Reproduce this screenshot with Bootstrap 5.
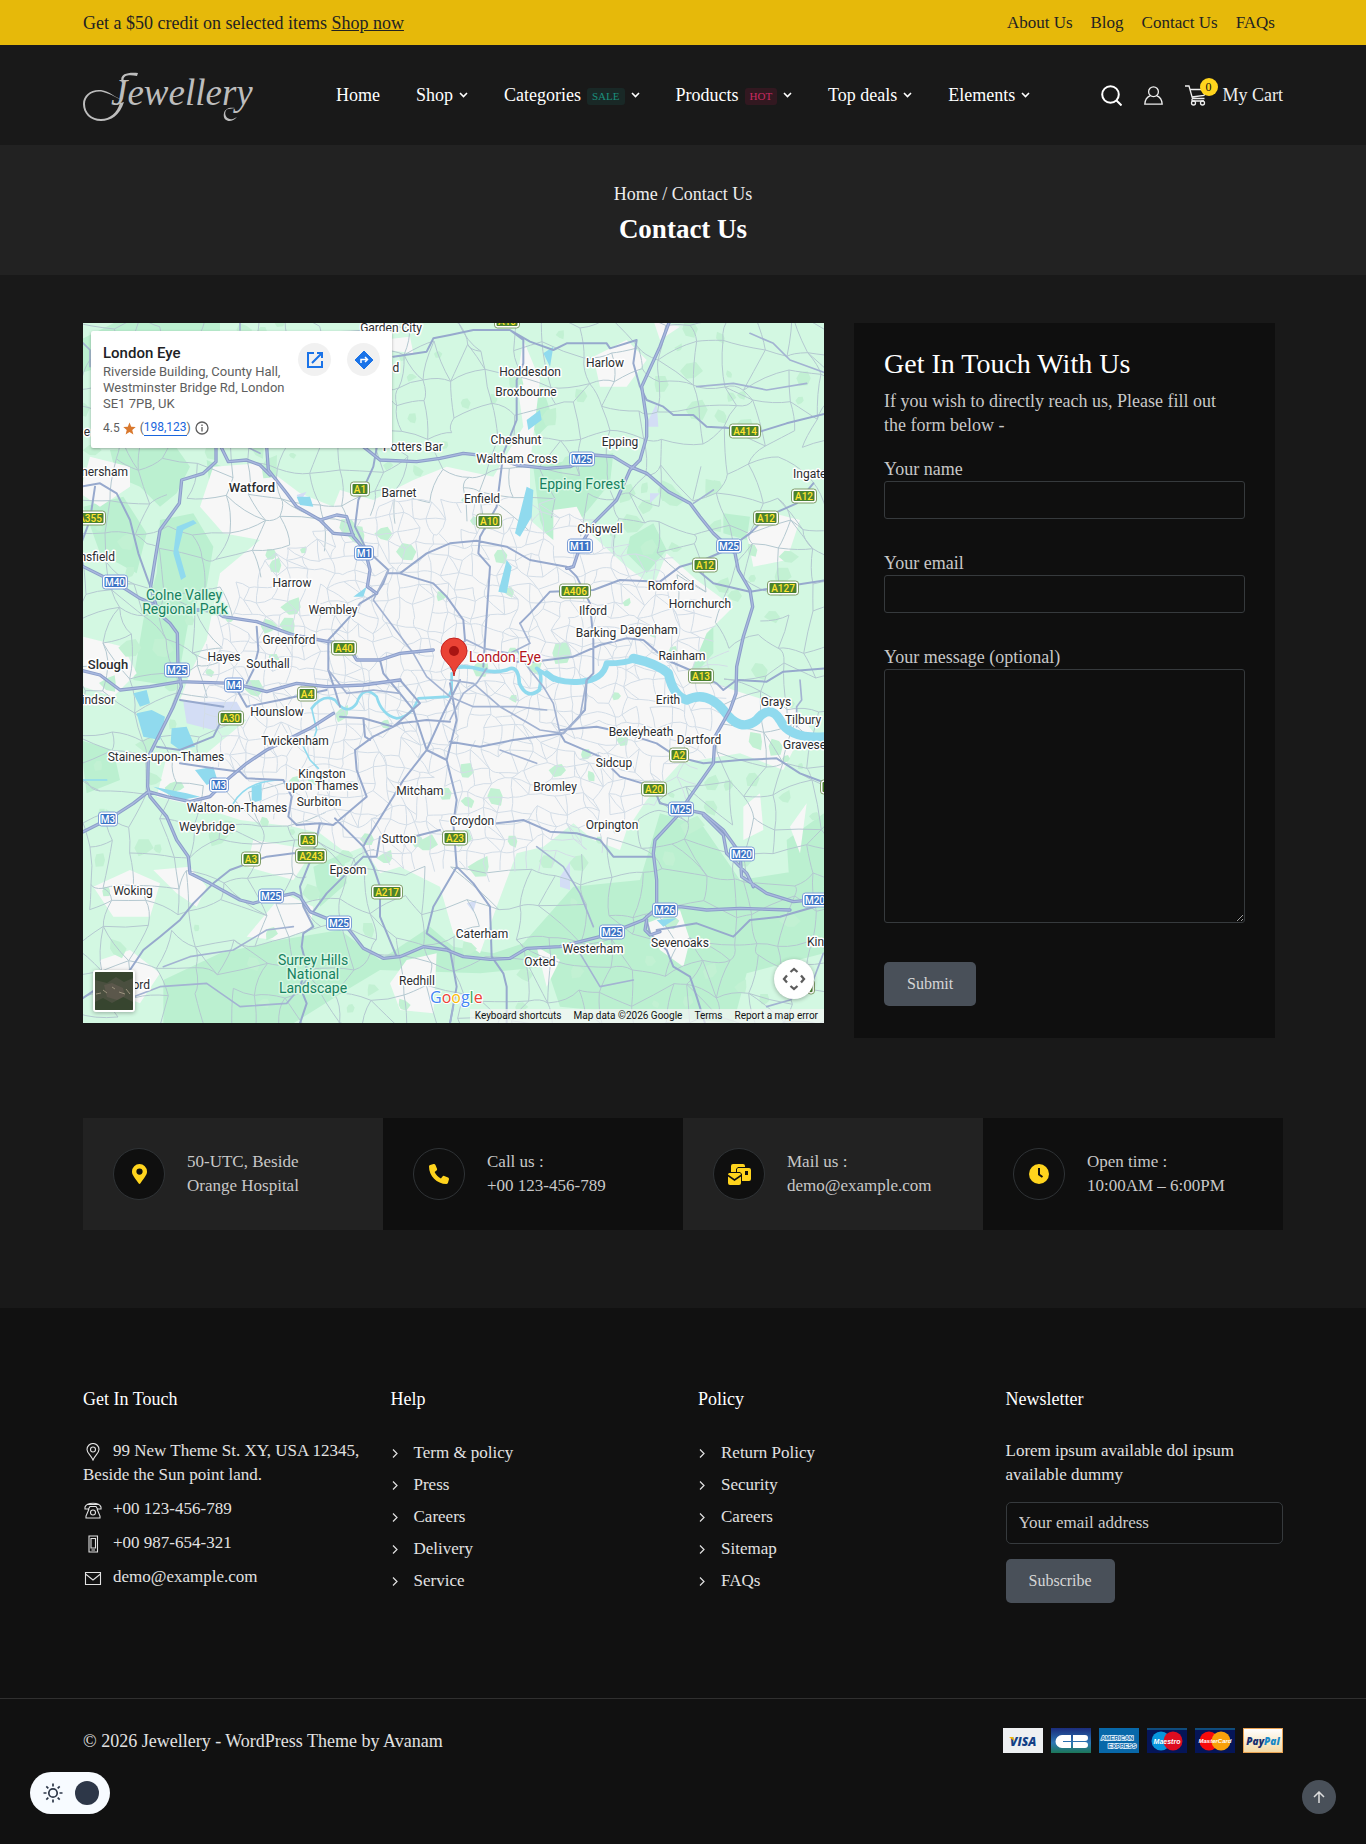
<!DOCTYPE html>
<html lang="en" data-bs-theme="dark">
<head>
<meta charset="utf-8">
<meta name="viewport" content="width=device-width, initial-scale=1">
<title>Contact Us - Jewellery</title>
<link href="https://cdn.jsdelivr.net/npm/bootstrap@5.3.0/dist/css/bootstrap.min.css" rel="stylesheet">
<style>
:root{--gold:#ffd41d;--ink:#111;--line:#363a3d}
body{font-family:"Liberation Serif",serif;font-size:18px;line-height:24px;background:#191919;color:#c8c8c8}
a{color:inherit;text-decoration:none}
.wrap{width:100%;max-width:1200px;margin:0 auto}
svg{display:block;flex:none}
.topbar{background:#e6b90a;color:#222;height:45px}
.topbar .promo a{text-decoration:underline}
.toplinks{gap:18px;padding-right:8px;font-size:17px}
.masthead{height:100px}
.brand{width:253px}
.mainnav{gap:36px;color:#fff}
.mainnav a{gap:6px}
.tag{font-size:11px;line-height:17px;padding:0 5px;border-radius:3px;margin-top:3px}
.tag-sale{background:#192826;color:#1b8f7d}
.tag-hot{background:#321820;color:#cb2b62}
.tools{gap:22px;color:#eee}
.count{position:absolute;left:15px;top:-5px;width:18px;height:18px;border-radius:50%;background:var(--gold);color:#111;font-size:12px;line-height:18px;text-align:center}
.hero{background:#222;height:130px;color:#eee;padding-top:37px}
.hero h1{font-size:27px;line-height:32px;color:#fff;font-weight:700;margin:7px 0 0}
.contact{padding:48px 8px 80px 0;gap:30px}
.mapbox{height:700px;background:#d3f8e2;font-family:Roboto,"Liberation Sans",sans-serif;overflow:hidden}
.mapart{width:100%;height:700px}
.mapcard{position:absolute;left:8px;top:8px;width:301px;height:117px;background:#fff;color:#5e5e5e;padding:14px 12px 0;font-size:12px;line-height:16px;box-shadow:0 1px 3px rgba(0,0,0,.3);border-radius:2px}
.mapcard b{font-size:15px;font-weight:500;color:#202124}
.mapcard .addr{font-size:13px;width:190px;margin-top:3px}
.mapcard a{color:#1a66dd}
.mapcard .cnt{border-bottom:1px solid #1a66dd;line-height:15px}
.mapacts{margin:-2px 0 0 -10px}
.dot{width:33px;height:33px;border-radius:50%;background:#f1f1f1}
.mapthumb{position:absolute;left:10px;bottom:11px;width:42px;height:42px;border:2px solid #fff;border-radius:3px;background:#fff;padding:0;overflow:hidden;box-shadow:0 1px 4px rgba(0,0,0,.3)}
.mappan{position:absolute;right:10px;bottom:24px;width:40px;height:40px;border:0;padding:0;border-radius:50%;background:#fff;box-shadow:0 1px 4px rgba(0,0,0,.3)}
.maplegal{position:absolute;right:0;bottom:0;height:14px;gap:12px;padding:0 6px 0 5px;font-size:10px;line-height:14px;color:#111;background:rgba(245,245,245,.7)}
.panel{flex:0 0 421px;background:#0f0f0f;padding:26px 30px 32px}
.panel h2{font-size:28px;line-height:30px;color:#fff;font-weight:400;margin:0 0 10px}
.panel p{margin:0 0 20px;max-width:345px}
.field{margin-bottom:32px}
.field label{display:block}
.field .form-control{height:38px;border:1px solid var(--line);background:#0f0f0f;border-radius:3px}
.field textarea.form-control{height:254px;resize:vertical}
.field-last{margin-bottom:39px}
.act{background:#495059;color:#d6d6d6;border:0;border-radius:5px;height:44px;padding:0 23px;font-size:16px}
.facts{font-size:17px}
.facts>div{height:112px;padding:0 30px;gap:22px;background:#0f0f0f}
.facts>div:nth-child(odd){background:#222}
.disc{width:52px;height:52px;flex:none;border-radius:50%;border:1px solid #2f3336;background:#0f0f0f}
.foot{background:var(--ink);margin-top:78px;padding-top:79px;color:#e2e2e2;font-size:17px}
.footgrid{gap:30px;min-height:311px}
.footgrid>div{flex:1 1 0}
.foot h3{font-size:18px;line-height:24px;font-weight:500;color:#fff;margin:0 0 28px}
.reach p{margin:0 0 10px}
.reach svg{display:inline-block;margin:0 10px 0 0;vertical-align:-5px}
.linklist{margin:0;padding:2px 0 0;list-style:none}
.linklist li{height:24px;margin-bottom:8px;gap:15px}
.news .form-control{height:42px;border:1px solid var(--line);background:#0f0f0f;border-radius:5px;font-size:17px;margin:15px 0}
.news .form-control::placeholder{color:#ccc;opacity:1}
.news p{margin:0}
.legal{border-top:1px solid #303030;height:146px;padding-top:29px;font-size:18px}
.pay{gap:8px}
.mode{position:fixed;left:30px;bottom:30px;width:80px;height:42px;border:0;border-radius:21px;background:#f7fbff;padding:0 11px}
.totop{position:fixed;right:30px;bottom:30px;width:34px;height:34px;border-radius:50%;background:#495059}
.town text{font-size:12px;fill:#2b2d30;stroke:#fff;stroke-width:3px;paint-order:stroke;text-anchor:middle;stroke-linejoin:round}
.town .big{font-weight:500;font-size:13px}
.town .park{fill:#168060;font-size:14px;stroke:#d9f8e5}
.town .poi{fill:#b3141c;font-size:14px}
.town .fin{text-anchor:end}
.town .ini{text-anchor:start}
.shield text{font-size:10px;font-weight:500;text-anchor:middle}
</style>
<script src="https://cdn.jsdelivr.net/npm/bootstrap@5.3.0/dist/js/bootstrap.bundle.min.js"></script>
</head>
<body>
<div class="topbar"><div class="wrap h-100 d-flex align-items-center justify-content-between">
  <div class="promo">Get a $50 credit on selected items <a href="#">Shop now</a></div>
  <nav class="toplinks d-flex"><a href="#">About Us</a><a href="#">Blog</a><a href="#">Contact Us</a><a href="#">FAQs</a></nav>
</div></div>

<header class="masthead"><div class="wrap h-100 d-flex align-items-center">
  <a class="brand" href="#" aria-label="Jewellery">
    <svg width="176" height="56" viewBox="0 0 176 56" fill="#bdbdbd"><text x="28" y="38" font-family="Liberation Serif" font-style="italic" font-size="37">Jewellery</text><path d="M41 35C37 48 28 54 18 54C7 54 0 46 0 37C0 28 8 22 18 23C27 24 32 31 38 32C34 32 29 27 20 25C10 23 2 29 2 37C2 46 9 52 18 52C27 52 34 46 37 36ZM39 16C36 8 42 5 55 6L54 9C44 7 39 9 41 15ZM146 42C140 42 141 54 150 52L154 50C148 57 139 54 141 46C142 42 146 40 152 41Z"/></svg>
  </a>
  <nav class="mainnav d-flex align-items-center">
    <a href="#">Home</a>
    <a class="d-flex align-items-center" href="#">Shop <svg width="9" height="6" viewBox="0 0 9 6" fill="none" stroke="currentColor" stroke-width="1.600"><path d="M1 1l3.500 3.500L8 1"/></svg></a>
    <a class="d-flex align-items-center" href="#">Categories <span class="tag tag-sale">SALE</span> <svg width="9" height="6" viewBox="0 0 9 6" fill="none" stroke="currentColor" stroke-width="1.600"><path d="M1 1l3.500 3.500L8 1"/></svg></a>
    <a class="d-flex align-items-center" href="#">Products <span class="tag tag-hot">HOT</span> <svg width="9" height="6" viewBox="0 0 9 6" fill="none" stroke="currentColor" stroke-width="1.600"><path d="M1 1l3.500 3.500L8 1"/></svg></a>
    <a class="d-flex align-items-center" href="#">Top deals <svg width="9" height="6" viewBox="0 0 9 6" fill="none" stroke="currentColor" stroke-width="1.600"><path d="M1 1l3.500 3.500L8 1"/></svg></a>
    <a class="d-flex align-items-center" href="#">Elements <svg width="9" height="6" viewBox="0 0 9 6" fill="none" stroke="currentColor" stroke-width="1.600"><path d="M1 1l3.500 3.500L8 1"/></svg></a>
  </nav>
  <div class="tools d-flex align-items-center ms-auto">
    <a href="#" aria-label="Search"><svg width="21" height="21" viewBox="0 0 21 21" fill="none" stroke="#fff" stroke-width="2"><circle cx="9.500" cy="9.500" r="8.300"/><path d="M15.500 15.500l5 5"/></svg></a>
    <a href="#" aria-label="Account"><svg width="19" height="19" viewBox="0 0 19 19" fill="none" stroke="currentColor" stroke-width="1.300"><circle cx="9.500" cy="5.700" r="4.900"/><path d="M6.500 9.700C3 11 1 14 .8 18.200h17.400C18 14 16 11 12.500 9.700"/></svg></a>
    <a class="d-flex align-items-center position-relative" href="#"><svg class="me-3" width="22" height="21" viewBox="0 0 22 21" fill="none" stroke="currentColor" stroke-width="1.300"><path d="M0 1h4l3.500 12.500h12M5 4.500h16l-2 6-12 1.500M8 13.500c-2 1-1 2.500 0 2.500h11"/><circle cx="8.500" cy="18" r="2"/><circle cx="17.500" cy="18" r="2"/></svg><span class="count">0</span>My Cart</a>
  </div>
</div></header>

<section class="hero text-center"><div><a href="#">Home</a> / Contact Us</div><h1>Contact Us</h1></section>

<main class="wrap">
<div class="contact d-flex align-items-start">
  <div class="mapbox position-relative flex-grow-1">
    <svg class="mapart" viewBox="0 0 741 700" preserveAspectRatio="xMidYMid slice" role="img" aria-label="Map of London">
      <rect width="741" height="700" fill="#d3f8e2"/>
      <g transform="translate(-3 -3) scale(.333333)">
        <g fill="#bbf0d0">
          <path d="M0 60L120 0 420 0 420 60 300 100 100 130 0 160ZM90 390L290 384 330 440 290 520 240 560 180 500 110 470ZM10 560L130 530 200 640 170 760 60 700ZM240 600L340 580 400 680 380 800 330 880 290 1100 160 1080 190 900 230 760ZM380 420L450 450 440 500 390 510Z"/>
          <path d="M1360 440L1600 400 1590 490 1500 600 1460 690 1420 700 1380 600ZM1330 240L1390 210 1420 300 1370 350ZM1650 650L1720 610 1760 690 1700 760 1640 700ZM1780 1010L1900 900 1900 1000 1830 1080ZM1930 580L2010 590 2000 660 1930 640Z"/>
          <path d="M720 1240L830 1220 850 1300 740 1350ZM600 1340L680 1330 690 1400 620 1410ZM0 1260L100 1290 120 1380 20 1420ZM700 1640L790 1600 800 1690 720 1760ZM250 1980L420 1900 600 1860 780 1830 900 1920 1050 1820 1120 1880 1240 1900 1330 1870 1480 1700 1680 1680 1740 1480 1870 1520 1980 1680 2232 1640 2232 1900 2000 1960 1960 2110 1440 2060 1400 1940 1200 1960 900 1950 800 2010 640 2110 250 2110ZM2120 1560L2232 1480 2232 1700 2130 1720Z"/>
        </g>
        <g fill="#f7f7f7">
          <path d="M400 440L540 430 660 520 760 560 780 510 880 540 1000 480 1100 440 1240 470 1330 320 1310 180 1330 60 1380 180 1350 430 1350 600 1420 660 1420 570 1490 560 1530 640 1640 740 1720 800 1760 700 1850 780 1960 860 1880 940 1830 1060 1960 1110 2150 1170 2232 1280 2140 1290 2110 1350 1980 1300 1800 1330 1700 1440 1640 1530 1620 1590 1540 1560 1480 1510 1390 1580 1310 1600 1250 1760 1200 1900 1120 1840 1080 1700 960 1640 900 1660 850 1580 800 1600 720 1540 640 1520 480 1500 360 1460 230 1430 260 1310 380 1300 500 1200 300 1140 330 1060 380 960 420 760 540 660 430 640 360 560Z"/>
          <path d="M10 950L130 980 170 1060 100 1130 10 1100ZM40 1700L150 1650 240 1690 210 1790 100 1790ZM220 1650L330 1640 380 1700 350 1760 290 1720ZM1540 110L1640 60 1700 120 1640 200 1560 200ZM2000 640L2080 580 2160 600 2120 720 2020 740ZM930 1990L980 1920 1070 1900 1060 2080 960 2070ZM60 1920L150 1890 240 1960 180 2050 60 2000ZM1700 1810L1800 1770 1830 1860 1810 1940 1740 1890ZM500 1850L610 1720 700 1760 690 1830 590 1860ZM900 60L990 50 1000 100 920 90ZM30 410L150 440 150 500 60 560 0 520ZM1990 1460L2040 1420 2050 1530 1990 1560ZM2130 1520L2180 1450 2160 1600ZM1370 1880L1440 1920 1400 2000ZM1720 0L1800 20 1740 60ZM520 1560L700 1590 640 1680 500 1640Z"/>
        </g>
        <g id="parks" fill="#c2f1d3"></g>
        <path fill="#d3ddf5" d="M310 1145L470 1145 490 1180 400 1230 320 1210ZM1710 290L1730 250 1735 320 1700 320ZM1440 1670L1470 1625 1470 1710 1440 1700ZM1160 1750L1190 1740 1180 1775ZM1710 520L1740 520 1710 550ZM650 525L680 515 660 545Z"/>
        <g fill="none"><path id="lanesRural" stroke="#b4c8d0" stroke-width="3"/><path id="lanesUrban" stroke="#d3dde7" stroke-width="3"/></g>
        <g fill="#90daee">
          <path d="M160 1120L200 1110 210 1150 180 1160ZM170 1180L215 1170 255 1190 240 1260 190 1250ZM275 1225L320 1220 345 1280 300 1290 272 1270ZM345 1350L400 1340 412 1380 380 1395ZM290 620L340 600 350 610 310 630 295 690 318 770 303 780 280 700ZM1340 500L1360 510 1355 590 1320 650 1305 640ZM1280 720L1295 740 1280 820 1255 815ZM1340 300L1380 270 1385 300 1345 330ZM1390 100L1420 80 1410 140ZM515 1400L545 1390 545 1440 515 1450ZM650 530L690 530 700 560 660 555ZM820 830L860 800 850 830ZM220 1400L320 1420 360 1430 300 1440ZM1730 1800L1790 1795 1750 1820Z"/>
        </g>
        <g fill="none" stroke="#90daee" stroke-linejoin="round" stroke-linecap="round">
          <path stroke-width="8" d="M1115 1060V1110L1105 1130 1015 1135Q995 1190 950 1195 905 1185 890 1130 850 1090 830 1150 800 1190 765 1140 730 1120 695 1165"/>
          <path stroke-width="5" d="M695 1165L710 1230 700 1260 670 1280 690 1320 715 1345M10 1380L80 1380M460 1450Q500 1380 610 1380"/>
          <path stroke-width="11" d="M1115 1045Q1160 1035 1200 1048T1280 1050Q1315 1030 1318 1090 1340 1140 1378 1110 1390 1060 1370 1045L1420 1080"/>
          <path stroke-width="18" d="M1400 1060Q1430 1090 1500 1085T1580 1030Q1640 1030 1670 1015"/>
          <path stroke-width="28" d="M1660 1015Q1730 1030 1765 1060 1780 1130 1820 1140 1880 1110 1930 1170 1980 1240 2030 1200 2070 1150 2100 1200 2130 1260 2240 1250"/>
        </g>
        <g fill="none" stroke-linejoin="round" stroke-linecap="round">
          <path stroke="#97a9cd" stroke-width="6" d="M890 384L880 440 835 540 825 620 860 690 925 750 910 790 890 820 840 850 810 890 745 960 745 1050 765 1110 780 1160M920 760L960 760 1040 700 1110 670 1190 662 1280 680 1350 720 1460 740 1490 770 1530 850 1540 960 1540 1060 1520 1080 1515 1170 1450 1240 1300 1260 1200 1280 1110 1265M960 760L1060 790 1100 830 1150 900 1155 960M1320 910L1350 880 1410 815 1540 810 1620 780 1740 785 1800 740 1870 720 1940 690 2010 640 2060 590 2150 550 2200 490M1840 740L1900 790 2010 815 2110 800 2240 780M1310 1025L1360 1025 1480 1010 1560 975 1640 955 1690 960 1760 1020 1830 1050 1910 1090 1930 1110 1970 1080 2060 1085 2110 1055 2240 1045M1440 1230L1550 1220 1620 1235 1730 1270 1790 1310 1870 1330 1980 1320 2090 1315 2160 1360 2240 1390M1440 1240L1455 1265 1560 1310 1620 1370 1720 1400 1740 1450 1800 1465M1680 200L1700 240 1750 260 1780 285 1840 285 1880 320 1960 325 2040 335 2120 310 2240 280M1290 30L1330 60 1330 130 1310 180 1310 300 1270 400 1250 560 1200 650 1195 700 1230 740 1215 960 1210 1040M940 110L1040 95 1060 55 1110 45 1180 30 1290 30 1350 65 1420 90 1460 70 1580 70 1590 85 1670 60 1660 130 1680 200M0 2040L60 2000 150 1950 190 1890 240 1850 300 1800 340 1750 400 1690 450 1650 560 1610 640 1600 700 1600 720 1510 760 1515 860 1430 830 1350 825 1290 880 1250 960 1210 1040 1200 1110 1205M1110 1090L1130 1200 1100 1320 1130 1440 1120 1510 1130 1640 1180 1690 1230 1760 1235 1910 1270 1960 1280 2000 1280 2110M1130 1640L1060 1760 1040 1840 1110 1890 1130 2000 1110 2110M765 1495L850 1580 880 1640 900 1700 900 1790 950 1910M850 1580L860 1560 940 1430 970 1380 1040 1290 1090 1180 1140 1080M700 1775L740 1720 800 1660 850 1610 890 1610 900 1550 1000 1550 1080 1530M700 1600L660 1700 670 1760 700 1820 670 1840 665 1880 680 1940 660 2000 680 2050 660 2110M1250 1510L1330 1500 1410 1535 1490 1540 1560 1560 1600 1610 1670 1610 1720 1610M1700 1800L1710 1840 1760 1890 1780 1940 1830 1970 1850 2030 1875 2110M1730 1830L1850 1810 1960 1850 2010 1800 2100 1790 2240 1750M0 500L60 490 110 520 150 600 175 700 200 770 215 810M45 500L30 600 0 680M230 1280L300 1290 400 1250 430 1190M300 1330L400 1345 480 1355 500 1375 610 1380 635 1430 625 1490 650 1515 720 1510M460 1090L500 1160 600 1140 740 1110M430 1160L300 1140M530 920L535 990 520 1050 500 1090M780 1190L850 1195 940 1220 1020 1150 960 1080M850 1195L855 1250 870 1260M900 1020L910 1060 960 1120 1000 1170 1040 1290 1100 1320"/>
          <path stroke="#a3b3d2" stroke-width="5" d="M925 750L880 840 940 920 1000 1000 1040 1070 1110 1130 1180 1160 1310 1160 1400 1170M1310 990L1350 1050 1390 1100 1420 1150 1440 1240M1520 1080L1500 1190 1450 1240M1110 1080L1180 1090 1260 1160 1380 1230 1450 1240M1110 990L1160 960 1210 985 1290 1000 1350 970 1320 910M1220 1045L1190 1090 1150 1120 1110 1200M745 1050L800 1120 880 1110 960 1120M1110 2110L1120 2060M2160 1080L2165 1140 2150 1160 2150 1220M2060 2060L2130 2040 2200 1980 2230 1900M10 740L0 700M1840 550L1900 510M480 370L540 400M0 60L30 90 30 140M480 0L480 30M110 2050L240 2000 380 1990 480 2060 620 2050 680 1980M250 1940L330 1910 460 1890 560 1830 640 1820M1370 1330L1260 1290M2010 40L2080 70 2130 120 2240 160M1850 200L1960 190 2060 210 2180 190M1500 1900L1560 2000 1660 1980M1370 1580L1450 1640 1500 1720 1540 1820"/>
          <path id="mline" stroke="#8c9ec9" stroke-width="10" d="M408 380L408 425 370 460 305 480 298 550 240 630 225 720 212 800 235 880 270 910 292 940 294 1040 304 1100 280 1160 230 1260 205 1310 203 1400 210 1430 260 1490 290 1560 325 1610 330 1660 390 1690 480 1740 520 1750 570 1735 640 1720 660 1730 690 1775 740 1795 800 1820 850 1885 910 1915 960 1910 1030 1880 1100 1890 1150 1910 1230 1918 1290 1915 1340 1885 1440 1880 1560 1850 1640 1820 1690 1800 1730 1765 1730 1680 1720 1600 1725 1560 1790 1490 1830 1430 1900 1330 1905 1250 1950 1170 1968 1120 1970 1040 1990 950 2018 860 2010 810 1975 750 1965 700 1900 640 1860 590 1830 550 1765 515 1700 460 1650 440 1600 410 1540 405 1470 440 1400 445 1310 435 1240 410 1150 400 1080 415 1010 425 900 420 850 380 M425 385L445 425 500 420 540 435 570 465M560 380L565 450 620 520 650 560 720 600 770 585 800 590 820 650 855 690 870 750 862 800 890 820M720 600L760 640 820 645M1770 0L1740 80 1685 200 1700 300 1700 350 1680 420 1650 450 1610 540 1540 610 1500 680 1480 740 1460 745M0 1050L60 1065 120 1110 210 1100 300 1085 460 1090 560 1115 650 1090 740 1100 850 1095 960 1080M10 1535L90 1495 160 1450 205 1415 260 1430 330 1445 390 1430 440 1380 500 1330 560 1290 690 1225 760 1180M10 740L110 790 180 835 260 870 340 870 400 870 430 890 530 905 640 945 745 965 800 970 830 1020 900 1020 960 1000 1060 990M1800 1465L1870 1480 1930 1530 1980 1600 1985 1670 2060 1720 2140 1745 2240 1735M1870 1485L1930 1545 1940 1600 2000 1660 2020 1700M1700 1790L1740 1765 1800 1760 1880 1770 1980 1765 2130 1770M1700 1800L1695 1830 1710 1845 1740 1835"/>
          <path id="mcore" stroke="#a9b9df" stroke-width="4"/>
        </g>
      </g>
      <g class="town" id="towns"></g>
      <g class="shield" id="shields"></g>
      <path d="M371 353C370 341 358 338 358 328A13 13 0 0 1 384 328C384 338 372 341 371 353Z" fill="#ea4335" stroke="#c5221f" stroke-width="1"/><circle cx="371" cy="328" r="5" fill="#a81412"/>
      <text x="347" y="680" font-size="16" font-weight="500" font-family="Open Sans" stroke="#fff" stroke-width="2" paint-order="stroke"><tspan fill="#4285f4">G</tspan><tspan fill="#ea4335">o</tspan><tspan fill="#fbbc05">o</tspan><tspan fill="#4285f4">g</tspan><tspan fill="#34a853">l</tspan><tspan fill="#ea4335">e</tspan></text>
    </svg>
    <div class="mapcard d-flex">
      <div><b class="d-block">London Eye</b><div class="addr">Riverside Building, County Hall, Westminster Bridge Rd, London SE1 7PB, UK</div>
        <div class="d-flex align-items-center mt-2">4.5&nbsp;<svg class="me-1" width="13" height="13" viewBox="0 0 24 24" fill="#d9782d"><path d="M12 1l3.200 7.800 8.300.6-6.400 5.400 2 8.200-7.100-4.500L4.900 23l2-8.200L.5 9.400l8.300-.6z"/></svg>(<a class="cnt" href="#">198,123</a>)<svg class="ms-1" width="14" height="14" viewBox="0 0 14 14" fill="none" stroke="#5e5e5e" stroke-width="1.300"><circle cx="7" cy="7" r="6"/><path d="M7 6v4.500M7 3.500v1.400"/></svg></div>
      </div>
      <div class="mapacts d-flex gap-3 ms-auto">
        <a class="dot d-flex align-items-center justify-content-center" href="#" aria-label="Open in Maps"><svg width="18" height="18" viewBox="0 0 18 18" fill="none" stroke="#1a73e8" stroke-width="2"><path d="M8 2H2v14h14v-6M11 2h5v5M16 2L6 12"/></svg></a>
        <a class="dot d-flex align-items-center justify-content-center" href="#" aria-label="Directions"><svg width="20" height="20" viewBox="0 0 20 20"><path d="M10 1l9 9-9 9-9-9z" fill="#1a73e8" stroke="#1a73e8" stroke-linejoin="round"/><path d="M7 13V9.500h6M11 7l2.500 2.500L11 12" fill="none" stroke="#fff" stroke-width="1.500"/></svg></a>
      </div>
    </div>
    <button class="mapthumb" aria-label="Satellite view"><svg width="38" height="38" viewBox="0 0 38 38"><rect width="38" height="38" fill="#4a4f3f"/><path d="M0 0h38v6l-9 4-8-5-9 6L0 8zM0 30l8-4 9 5 11-6 10 5v8H0z" fill="#37452f"/><path d="M9 13l8-2 11 5 2 8-8 4-10-3z" fill="#5b574b"/><path d="M1 22l5-1M24 20l6 2M8 18l4 3M31 17l4 5M17 15l3 2" stroke="#9a927c"/></svg></button>
    <button class="mappan d-flex align-items-center justify-content-center" aria-label="Map camera controls"><svg width="24" height="24" viewBox="0 0 24 24" fill="none" stroke="#5c5c5c" stroke-width="2.300"><path d="M8.500 5L12 2l3.500 3M8.500 19l3.500 3 3.500-3M5 8.500L2 12l3 3.500M19 8.500l3 3.500-3 3.500"/></svg></button>
    <div class="maplegal d-flex"><a href="#">Keyboard shortcuts</a><span>Map data ©2026 Google</span><a href="#">Terms</a><a href="#">Report a map error</a></div>
  </div>

  <form class="panel">
    <h2>Get In Touch With Us</h2>
    <p>If you wish to directly reach us, Please fill out the form below -</p>
    <div class="field"><label for="nm">Your name</label><input class="form-control" id="nm" type="text"></div>
    <div class="field"><label for="em">Your email</label><input class="form-control" id="em" type="email"></div>
    <div class="field field-last"><label for="ms">Your message (optional)</label><textarea class="form-control" id="ms"></textarea></div>
    <button class="act" type="submit">Submit</button>
  </form>
</div>

<div class="facts row g-0">
  <div class="col-3 d-flex align-items-center"><span class="disc d-flex align-items-center justify-content-center"><svg width="15" height="20" viewBox="0 0 384 512" fill="#ffd41d"><path d="M172 502C27 291 0 270 0 192a192 192 0 0 1 384 0c0 78-27 99-172 310-10 13-30 13-40 0zm20-230a80 80 0 1 0 0-160 80 80 0 0 0 0 160z"/></svg></span><span>50-UTC, Beside<br>Orange Hospital</span></div>
  <div class="col-3 d-flex align-items-center"><span class="disc d-flex align-items-center justify-content-center"><svg width="20" height="20" viewBox="0 0 512 512" fill="#ffd41d"><path d="M165 25c-8-19-29-29-48-23L29 26C12 30 0 46 0 64c0 247 201 448 448 448 18 0 34-12 38-29l24-88c6-19-4-40-23-48l-96-40c-16-7-35-2-46 12l-40 49C234 335 177 278 144 207l49-40c14-11 19-30 12-46z"/></svg></span><span>Call us :<br>+00 123-456-789</span></div>
  <div class="col-3 d-flex align-items-center"><span class="disc d-flex align-items-center justify-content-center"><svg width="23" height="21" viewBox="0 0 23 21" fill="#ffd41d"><path d="M5 0h10a2 2 0 0 1 2 2v1H10L8 5v3H3V2a2 2 0 0 1 2-2zM10 4h11a2 2 0 0 1 2 2v9a2 2 0 0 1-2 2h-7V10L12 8H9V5zM17 7v4h3V7zM0 10.500c0-1 1-1.500 1.500-1.500h10c.5 0 1.500.500 1.500 1.500L6.500 15zM0 12.500l6.500 4.500 6.500-4.500V19a2 2 0 0 1-2 2H2a2 2 0 0 1-2-2z" fill-rule="evenodd"/></svg></span><span>Mail us :<br>demo@example.com</span></div>
  <div class="col-3 d-flex align-items-center"><span class="disc d-flex align-items-center justify-content-center"><svg width="20" height="20" viewBox="0 0 20 20"><circle cx="10" cy="10" r="10" fill="#ffd41d"/><path d="M10 4v6.500l3.500 2.500" fill="none" stroke="#0f0f0f" stroke-width="2"/></svg></span><span>Open time :<br>10:00AM – 6:00PM</span></div>
</div>
</main>

<footer class="foot">
  <div class="wrap footgrid d-flex">
    <div class="reach"><h3>Get In Touch</h3>
      <p><svg width="20" height="18" viewBox="0 0 20 18" fill="none" stroke="currentColor" stroke-width="1.100"><path d="M10 17C8 12 4 10 4 6.500a6 6 0 0 1 12 0C16 10 12 12 10 17z"/><circle cx="10" cy="6.500" r="2.500"/></svg>99 New Theme St. XY, USA 12345, Beside the Sun point land.</p>
      <p><svg width="20" height="18" viewBox="0 0 20 18" fill="none" stroke="currentColor" stroke-width="1.100"><path d="M2 6c2-5 14-5 16 0v2h-3.500L13 5.500H7L5.500 8H2zM6 8l-3 7v2h14v-2l-3-7M4 3.500h12"/><circle cx="10" cy="11.500" r="2.500"/></svg>+00 123-456-789</p>
      <p><svg width="20" height="18" viewBox="0 0 20 18" fill="none" stroke="currentColor" stroke-width="1.100"><path d="M6 1h8.500v16H6zM8 3.500h4.500v9.500H8zM8.500 15h3.500"/></svg>+00 987-654-321</p>
      <p><svg width="20" height="18" viewBox="0 0 20 18" fill="none" stroke="currentColor" stroke-width="1.100"><path d="M2.500 3.500h15v12h-15zM2.500 5l7.500 6 7.500-6"/></svg>demo@example.com</p>
    </div>
    <div><h3>Help</h3><ul class="linklist" data-items="Term &amp; policy|Press|Careers|Delivery|Service"></ul></div>
    <div><h3>Policy</h3><ul class="linklist" data-items="Return Policy|Security|Careers|Sitemap|FAQs"></ul></div>
    <div class="news"><h3>Newsletter</h3><p>Lorem ipsum available dol ipsum available dummy</p>
      <input class="form-control" type="email" placeholder="Your email address" aria-label="Your email address"><button class="act">Subscribe</button></div>
  </div>
  <div class="legal"><div class="wrap d-flex justify-content-between align-items-center">
    <div>© 2026 Jewellery - WordPress Theme by Avanam</div>
    <div class="pay d-flex">
      <svg width="40" height="25" viewBox="0 0 40 25" role="img" aria-label="Visa"><rect width="40" height="25" fill="#eef0f2"/><text x="7" y="18" font-family="Open Sans" font-weight="800" font-style="italic" font-size="12" fill="#123f86">VISA</text><path d="M6 9h4l1.500 4z" fill="#f5b300"/></svg>
      <svg width="40" height="25" viewBox="0 0 40 25" role="img" aria-label="CB"><defs><linearGradient id="cbg" x2="0" y2="1"><stop stop-color="#1b2c7c"/><stop offset=".6" stop-color="#2d78b5"/><stop offset="1" stop-color="#1c7858"/></linearGradient></defs><rect width="40" height="25" fill="url(#cbg)"/><path d="M20 7h-9a6 6 0 0 0 0 13h9v-6h-8v-1h8zM22 7h12a3 3 0 0 1 0 6H22zM22 14h12a3 3 0 0 1 0 6H22z" fill="#fff"/></svg>
      <svg width="40" height="25" viewBox="0 0 40 25" role="img" aria-label="American Express"><rect width="40" height="25" fill="#0868a9"/><g font-family="Liberation Sans" font-weight="700" font-size="6" fill="#0868a9" stroke="#e8f6ff" stroke-width="1.500" paint-order="stroke"><text x="2" y="12">AMERICAN</text><text x="9" y="20">EXPRESS</text></g></svg>
      <svg width="40" height="25" viewBox="0 0 40 25" role="img" aria-label="Maestro"><rect width="40" height="25" fill="#051558"/><rect width="40" height="2" fill="#0f4c7d"/><circle cx="14" cy="13" r="9.500" fill="#0895dd"/><circle cx="26" cy="13" r="9.500" fill="#dc0c20"/><text x="20" y="16" text-anchor="middle" font-family="Liberation Sans" font-weight="700" font-style="italic" font-size="7" fill="#fff">Maestro</text></svg>
      <svg width="40" height="25" viewBox="0 0 40 25" role="img" aria-label="MasterCard"><rect width="40" height="25" fill="#051558"/><rect width="40" height="2" fill="#0f4c7d"/><circle cx="14" cy="13" r="9.500" fill="#f70b0b"/><circle cx="26" cy="13" r="9.500" fill="#f9a00a"/><text x="20" y="15" text-anchor="middle" font-family="Liberation Sans" font-weight="700" font-style="italic" font-size="6" fill="#fff">MasterCard</text></svg>
      <svg width="40" height="25" viewBox="0 0 40 25" role="img" aria-label="PayPal"><defs><linearGradient id="ppg" x2="0" y2="1"><stop stop-color="#fff"/><stop offset="1" stop-color="#f4d9a4"/></linearGradient></defs><rect x=".5" y=".5" width="39" height="24" fill="url(#ppg)" stroke="#e9a252"/><text x="20" y="17" text-anchor="middle" font-family="Open Sans" font-weight="800" font-style="italic" font-size="10" fill="#17306f">Pay<tspan fill="#1688c7">Pal</tspan></text></svg>
    </div>
  </div></div>
</footer>

<button class="mode d-flex align-items-center justify-content-between" aria-label="Switch colour mode"><svg width="24" height="24" viewBox="0 0 24 24" fill="none" stroke="#2d3748" stroke-width="1.700"><circle cx="12" cy="12" r="4.200"/><path d="M12 2.500v3M12 18.500v3M2.500 12h3M18.500 12h3M5.300 5.300l2 2M16.700 16.700l2 2M5.300 18.700l2-2M16.700 7.300l2-2"/></svg><svg width="24" height="24"><circle cx="12" cy="12" r="12" fill="#2d3748"/></svg></button>
<a class="totop d-flex align-items-center justify-content-center" href="#" aria-label="Back to top"><svg width="12" height="12" viewBox="0 0 12 12" fill="none" stroke="#ddd" stroke-width="1.500"><path d="M6 12V1M1 6l5-5 5 5"/></svg></a>

<script>
document.querySelectorAll('.linklist').forEach(function(ul){
  ul.innerHTML=ul.dataset.items.split('|').map(function(t){
    return '<li class="d-flex align-items-center"><svg width="8" height="9" viewBox="0 0 8 9" fill="none" stroke="currentColor" stroke-width="1.200"><path d="M2 .5l4 4-4 4"/></svg><a href="#">'+t.replace('&','&amp;')+'</a></li>';}).join('');
});
/* light core line of the motorways */
document.getElementById('mcore').setAttribute('d',document.getElementById('mline').getAttribute('d'));

/* town labels: text, x, baseline, class */
var towns=[['Garden City',308,9],['d',313,49],['e',4,113],['Potters Bar',330,128],['mersham',45,153,'fin'],['Watford',169,169,'big'],['Barnet',316,174],['nsfield',32,238,'fin'],['Colne Valley',101,277,'park'],['Regional Park',102,291,'park'],['Harrow',209,264],['Wembley',250,291],['Greenford',206,321],['Hayes',141,338],['Southall',185,345],['Slough',25,346,'big'],['London Eye',422,339,'poi'],['Harlow',522,44],['Hoddesdon',447,53],['Broxbourne',443,73],['Cheshunt',433,121],['Epping',537,123],['Waltham Cross',434,140],['Ingate',710,155,'ini'],['Epping Forest',499,166,'park'],['Enfield',399,180],['Chigwell',517,210],['Romford',588,267],['Hornchurch',617,285],['Ilford',510,292],['Barking',513,314],['Dagenham',566,311],['Rainham',599,337],['indsor',32,381,'fin'],['Hounslow',194,393],['Twickenham',212,422],['Staines-upon-Thames',83,438],['Kingston',239,455],['upon Thames',239,467],['Surbiton',236,483],['Walton-on-Thames',154,489],['Weybridge',124,508],['Mitcham',337,472],['Croydon',389,502],['Sutton',316,520],['Epsom',265,551],['Woking',50,572],['Surrey Hills',230,642,'park'],['National',230,656,'park'],['Landscape',230,670,'park'],['Redhill',334,662],['ord',67,666,'fin'],['Erith',585,381],['Grays',693,383],['Tilbury',720,401],['Gravese',700,426,'ini'],['Bexleyheath',558,413],['Dartford',616,421],['Sidcup',531,444],['Bromley',472,468],['Orpington',529,506],['Caterham',399,615],['Westerham',510,630],['Oxted',457,643],['Sevenoaks',597,624],['Kin',724,623,'ini']];
document.getElementById('towns').innerHTML=towns.map(function(t){return '<text x="'+t[1]+'" y="'+t[2]+'" class="'+(t[3]||'')+'">'+t[0]+'</text>';}).join('');
/* road shields: blue for motorways, green for A roads */
var sh=[['A1',277,166],['A355',7,195],['M40',32,259],['M1',281,230],['A40',261,325],['M25',94,347],['M4',151,362],['A10',424,-2],['A414',662,108],['M25',499,136],['A12',721,173],['A12',683,195],['A10',406,198],['M11',497,223],['M25',646,223],['A12',622,242],['A406',492,268],['A127',700,265],['A13',618,353],['A4',224,371],['A30',148,395],['M3',136,462],['M3',25,496],['A23',372,515],['A3',225,517],['A243',228,533],['A3',168,536],['A217',304,569],['M25',188,573],['M25',256,600],['A2',596,432],['A20',571,466],['M25',598,486],['M20',659,531],['M25',529,609],['M26',582,587],['M20',732,577],['',741,464],['',728,664]];
document.getElementById('shields').innerHTML=sh.map(function(s){var w=s[0].length*6+5,m=s[0][0]==='M';
  return '<rect x="'+(s[1]-w/2-1)+'" y="'+(s[2]-7)+'" width="'+(w+2)+'" height="14" rx="3" fill="#fff" stroke="'+(m?'#7f9fd6':'#7f9d68')+'"/><rect x="'+(s[1]-w/2+1)+'" y="'+(s[2]-5)+'" width="'+(w-2)+'" height="10" rx="1" fill="'+(m?'#3c74c6':'#4a812f')+'"/><text x="'+s[1]+'" y="'+(s[2]+4)+'" fill="'+(m?'#fff':'#ffe32e')+'">'+s[0]+'</text>';}).join('');

/* minor road mesh and pocket parks, from a fixed seed */
var seed=7;function rnd(){seed=(seed*16807)%2147483647;return seed/2147483647;}
function urban(x,y){var a=(x-1130)/780,b=(y-1080)/560;return a*a+b*b<1;}
function mesh(step,test,keep){var cols=Math.ceil(2300/step),rows=Math.ceil(2200/step),p=[],d='';
  for(var j=0;j<=rows;j++){p[j]=[];for(var i=0;i<=cols;i++)p[j][i]=[Math.round((i+rnd()*.8-.4)*step),Math.round((j+rnd()*.8-.4)*step)];}
  function seg(a,b){if(rnd()>keep||!test(a[0],a[1]))return;var k=step*.35;
    d+='M'+a+'Q'+Math.round((a[0]+b[0])/2+(rnd()-.5)*k)+' '+Math.round((a[1]+b[1])/2+(rnd()-.5)*k)+' '+b;}
  for(j=0;j<rows;j++)for(i=0;i<cols;i++){seg(p[j][i],p[j][i+1]);seg(p[j][i],p[j+1][i]);if(rnd()<.2)seg(p[j][i],p[j+1][i+1]);}
  return d;}
document.getElementById('lanesUrban').setAttribute('d',mesh(42,urban,.85));
document.getElementById('lanesRural').setAttribute('d',mesh(88,function(x,y){return !urban(x,y);},.8));
var pk='';for(var n=0;n<190;n++){var x=Math.round(rnd()*2230),y=Math.round(rnd()*2100),r=10+rnd()*22;pk+='M';for(var k=0;k<6;k++){var q=r*(.6+rnd()*.7);pk+=(k?'L':'')+Math.round(x+q*Math.cos(k*1.047))+' '+Math.round(y+q*Math.sin(k*1.047));}pk+='Z';}
document.getElementById('parks').innerHTML='<path d="'+pk+'"/>';
</script>
</body>
</html>
